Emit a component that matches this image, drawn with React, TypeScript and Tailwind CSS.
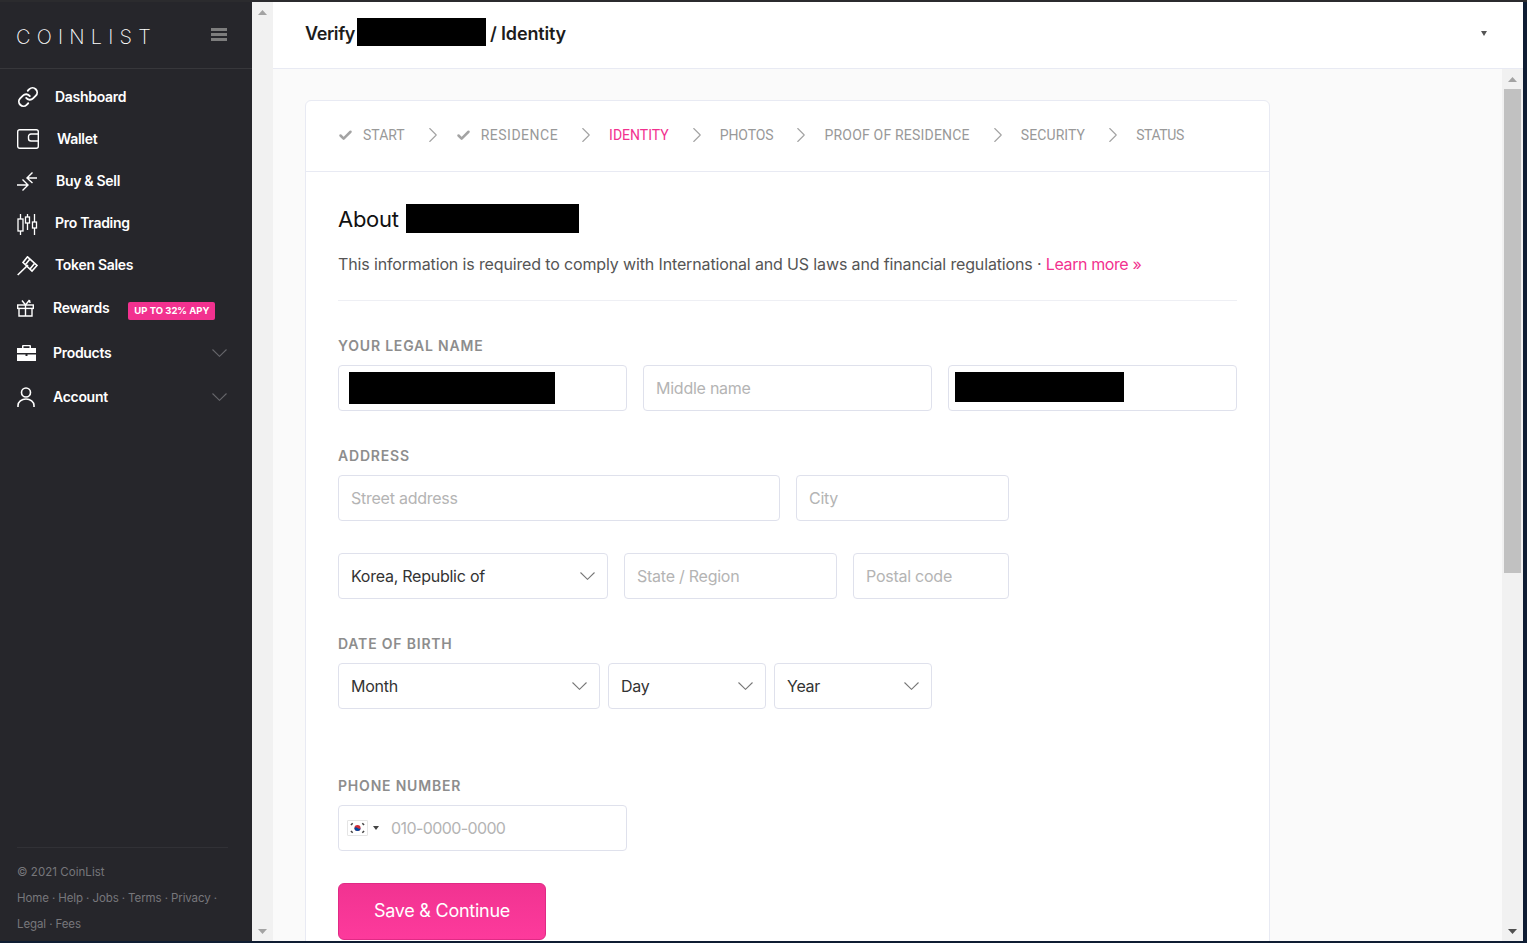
import React from 'react'
import { ChevronRight, Check } from 'lucide-react'

const font = "font-['Inter',sans-serif]"

function LinkIcon() {
  return (
    <svg width="22" height="22" viewBox="0 0 24 24" fill="none" stroke="white" strokeWidth="2" strokeLinecap="round" strokeLinejoin="round">
      <path d="M10 13a5 5 0 0 0 7.54.54l3-3a5 5 0 0 0-7.07-7.07l-1.72 1.71" />
      <path d="M14 11a5 5 0 0 0-7.54-.54l-3 3a5 5 0 0 0 7.07 7.07l1.71-1.71" />
    </svg>
  )
}

function WalletIcon() {
  return (
    <svg width="22" height="20" viewBox="0 0 22 20" fill="none" stroke="white" strokeWidth="1.4">
      <rect x="0.7" y="0.7" width="20.6" height="18.6" rx="2" />
      <path d="M21 5h-7a2.5 2.5 0 0 0-2.5 2.5v2A2.5 2.5 0 0 0 14 12h7" />
    </svg>
  )
}

function SwapIcon() {
  return (
    <svg width="21" height="20" viewBox="0 0 21 20" fill="none" stroke="white" strokeWidth="1.4">
      <path d="M0 14h11M5.5 8.5 11 14l-5.500 5.500" />
      <path d="M10 7h10M15.500 1.500 10 7l5.500 5" />
    </svg>
  )
}

function CandlesIcon() {
  return (
    <svg className="mt-[2px]" width="22" height="21" viewBox="0 0 22 21" fill="none" stroke="white" strokeWidth="1.3">
      <path d="M3.500 0v5M3.500 17v4M10.500 0v3M10.500 9v7M17.500 0v8M17.500 14v7" />
      <rect x="1" y="5" width="5" height="12" />
      <rect x="8.500" y="3" width="4" height="6" />
      <rect x="15.500" y="8" width="4" height="6" />
    </svg>
  )
}

function GavelIcon() {
  return (
    <svg className="mt-[2px]" width="21" height="20" viewBox="0 0 21 20" fill="none" stroke="white" strokeWidth="1.6">
      <path d="M0.700 19 11 9" />
      <path d="M10.500 0.800 20 9.500 15 15 6 6.500Z" />
      <path d="m13 3-4.500 5.500M17.500 7.500 13 13" />
    </svg>
  )
}

function GiftIcon() {
  return (
    <svg width="17" height="18" viewBox="0 0 17 18" fill="none" stroke="white" strokeWidth="1.4">
      <rect x="0.700" y="6" width="15.600" height="3.400" />
      <path d="M2 9.400V17h13V9.400M8.500 6v11" />
      <path d="M8.500 6 5 1.500M8.500 6l4-5M12.500 1l.5 3" />
    </svg>
  )
}

function CaseIcon() {
  return (
    <svg width="19" height="16" viewBox="0 0 19 16" fill="white">
      <path d="M6 0h7a1 1 0 0 1 1 1v2h5v5H0V3h5V1a1 1 0 0 1 1-1Zm.500 1.300V3h6V1.300Z" fillRule="evenodd" />
      <path d="M0 9.500h8.500V11h2V9.500H19V16H0Z" />
    </svg>
  )
}

function UserIcon() {
  return (
    <svg width="18" height="20" viewBox="0 0 18 20" fill="none" stroke="white" strokeWidth="1.600">
      <circle cx="9" cy="5.500" r="4.500" />
      <path d="M1 20v-1.500a8 6.500 0 0 1 16 0V20" />
    </svg>
  )
}

function WideChevron({ className }: { className: string }) {
  return (
    <svg className={className} width="15" height="8" viewBox="0 0 15 8" fill="none" stroke="currentColor" strokeWidth="1.100">
      <path d="M0.500 0.500 7.500 7.300 14.500 0.500" />
    </svg>
  )
}

function NavRow({ icon, label, labelClass, rowClass, badge, chevron }: { icon: React.ReactNode; label: string; labelClass: string; rowClass: string; badge?: boolean; chevron?: boolean }) {
  return (
    <div className={`flex items-center pl-[17px] pr-[25px] ${rowClass}`}>
      {icon}
      <span className={`mb-[1px] text-[14px] font-semibold text-white tracking-[-0.3px] ${labelClass}`}>{label}</span>
      {badge && <span className="ml-[19px] mt-[6px] flex h-[18px] w-[87px] items-center justify-center rounded-[2px] bg-[#f2318f] text-[9.500px] font-bold text-white">UP TO 32% APY</span>}
      {chevron && <WideChevron className="ml-auto text-[#66666b]" />}
    </div>
  )
}

function ScrollArrow({ up, dark }: { up?: boolean; dark?: boolean }) {
  return (
    <div className={`flex h-[20px] items-center justify-center ${dark ? 'text-[#505050]' : 'text-[#a3a3a3]'}`}>
      <svg width="9" height="5" viewBox="0 0 9 5" fill="currentColor">
        {up ? <path d="M4.500 0 9 5H0Z" /> : <path d="M0 0h9L4.500 5Z" />}
      </svg>
    </div>
  )
}

function Sidebar() {
  return (
    <aside className="flex h-full w-[252px] shrink-0 flex-col bg-[#26262b]">
      <div className="flex h-[67px] items-center justify-between border-b border-[#37373b] pl-[16px] pr-[25px]">
        <span className="mt-[3px] text-[20px] font-extralight leading-none tracking-[6.200px] text-white">COINLIST</span>
        <div className="flex flex-col gap-[2px] pb-[2px]">
          <div className="h-[3px] w-[16px] bg-[#7d7d7d]" />
          <div className="h-[3px] w-[16px] bg-[#7d7d7d]" />
          <div className="h-[3px] w-[16px] bg-[#7d7d7d]" />
        </div>
      </div>
      <nav className="flex flex-col pt-[7px]">
        <NavRow rowClass="h-[42px]" icon={<LinkIcon />} label="Dashboard" labelClass="ml-[16px]" />
        <NavRow rowClass="h-[42px]" icon={<WalletIcon />} label="Wallet" labelClass="ml-[18px]" />
        <NavRow rowClass="h-[42px]" icon={<SwapIcon />} label="Buy & Sell" labelClass="ml-[18px]" />
        <NavRow rowClass="h-[42px]" icon={<CandlesIcon />} label="Pro Trading" labelClass="ml-[16px]" />
        <NavRow rowClass="h-[42px]" icon={<GavelIcon />} label="Token Sales" labelClass="ml-[17px]" />
        <NavRow rowClass="h-[44px]" icon={<GiftIcon />} label="Rewards" labelClass="ml-[19px]" badge />
        <NavRow rowClass="h-[45px]" icon={<CaseIcon />} label="Products" labelClass="ml-[17px]" chevron />
        <NavRow rowClass="h-[44px]" icon={<UserIcon />} label="Account" labelClass="ml-[18px]" chevron />
      </nav>
      <div className="mx-[17px] mt-auto w-[211px] whitespace-nowrap border-t border-[#313136] pb-[4px] pt-[11px] text-[11.500px] leading-[26px] tracking-[-0.1px] text-[#77777b]">
        <div className="tracking-[0.05px]">© 2021 CoinList</div>
        <div>Home · Help · Jobs · Terms · Privacy ·</div>
        <div>Legal · Fees</div>
      </div>
    </aside>
  )
}

function Step({ label, done, active, last, className }: { label: string; done?: boolean; active?: boolean; last?: boolean; className?: string }) {
  return (
    <div className="flex items-center">
      {done && <Check className="mr-[10px] text-[#a3a3a3]" size={15} strokeWidth={4} />}
      <span className={`font-['Roboto',sans-serif] text-[14px] ${active ? 'text-[#f2318f]' : 'text-[#999999]'} ${className ?? ''}`}>{label}</span>
      {!last && <ChevronRight className="ml-[15px] mr-[10px] text-[#a3a3a3]" size={26} strokeWidth={1} />}
    </div>
  )
}

function Label({ children, className }: { children: React.ReactNode; className: string }) {
  return <div className={`text-[14px] font-semibold leading-[20px] tracking-[0.8px] text-[#8d8d8d] ${className}`}>{children}</div>
}

function Field({ placeholder, className, children }: { placeholder?: string; className: string; children?: React.ReactNode }) {
  return (
    <div className={`flex h-[46px] items-center rounded-[4px] border border-[#dfe1ec] bg-white px-[12px] pb-[1px] text-[16px] tracking-[-0.25px] text-[#b4b4b4] ${className}`}>
      {placeholder}
      {children}
    </div>
  )
}

function SelectField({ value, className }: { value: string; className: string }) {
  return (
    <div className={`flex h-[46px] items-center justify-between rounded-[4px] border border-[#dfe1ec] bg-white pl-[12px] pr-[12px] text-[16px] tracking-[-0.25px] text-[#333333] ${className}`}>
      <span className="mb-[1px]">{value}</span>
      <WideChevron className="text-[#777777]" />
    </div>
  )
}

function KoreaFlag() {
  return (
    <svg width="21" height="16" viewBox="0 0 21 16" className="rounded-[1px] border border-[#e5e5e5]">
      <rect width="21" height="16" fill="white" />
      <circle cx="10.500" cy="8" r="3.500" fill="#cd2e3a" />
      <path d="M7 8a3.500 3.500 0 0 0 7 0c-1 1.500-2.500 1-3.500 0S8 6.500 7 8Z" fill="#0047a0" />
      <path d="M3 4.500 5 2.500M16 2.500l2 2M3 11.500l2 2M16 13.500l2-2" stroke="#444444" strokeWidth="1.800" />
    </svg>
  )
}

export default function App() {
  return (
    <div className={`flex h-[943px] w-[1527px] flex-col overflow-hidden bg-[#0f1d33] ${font}`}>
      <div className="h-[2px] shrink-0 bg-[#2b2b2e]" />
      <div className="flex min-h-0 flex-1 pr-[4px] pb-[2px]">
        <Sidebar />
        <div className="flex w-[21px] shrink-0 flex-col justify-between bg-[#f1f1f1]">
          <ScrollArrow up />
          <ScrollArrow />
        </div>
        <div className="flex min-w-0 flex-1 flex-col bg-white">
          <header className="flex h-[67px] shrink-0 items-center justify-between border-b border-[#e8eaf3] pb-[4px] pl-[32px] pr-[36px]">
            <div className="flex items-center text-[18px] font-semibold tracking-[-0.4px] text-[#1c1c1c]">
              <span>Verify</span>
              <div className="mb-[2px] ml-[2px] h-[28px] w-[129px] bg-black" />
              <span className="ml-[4px] tracking-[-0.15px]">/ Identity</span>
            </div>
            <svg width="6" height="5" viewBox="0 0 6 5" fill="#555555"><path d="M0 0h6L3 5Z" /></svg>
          </header>
          <div className="flex min-h-0 flex-1">
            <main className="min-w-0 flex-1 overflow-hidden bg-[#fafafa] pl-[32px] pt-[31px]">
              <section className="w-[965px] rounded-[6px] border border-[#e8eaf3] bg-white pb-[40px]">
                <div className="flex h-[71px] items-center border-b border-[#e8eaf3] pb-[2px] pl-[32px]">
                  <Step label="START" done />
                  <Step label="RESIDENCE" done className="tracking-[0.5px]" />
                  <Step label="IDENTITY" active />
                  <Step label="PHOTOS" className="tracking-[-0.1px]" />
                  <Step label="PROOF OF RESIDENCE" className="tracking-[0.2px]" />
                  <Step label="SECURITY" className="tracking-[0.1px]" />
                  <Step label="STATUS" last className="tracking-[-0.4px]" />
                </div>
                <div className="px-[32px]">
                  <div className="mt-[32px] flex items-center">
                    <h1 className="h-[29px] pt-[1px] text-[22px] font-normal leading-[29px] tracking-[-0.3px] text-[#111111]">About</h1>
                    <div className="ml-[7px] h-[29px] w-[173px] bg-black" />
                  </div>
                  <p className="mt-[19px] border-b border-[#eeeff4] pb-[24px] text-[16px] leading-[24px] tracking-[-0.14px] text-[#555555]">
                    This information is required to comply with International and US laws and financial regulations · <span className="tracking-[-0.4px] text-[#f2318f]">Learn more »</span>
                  </p>
                  <Label className="mt-[35px]">YOUR LEGAL NAME</Label>
                  <div className="mt-[9px] flex gap-[16px]">
                    <Field className="w-[289px] !px-[10px]"><div className="mt-[1px] h-[32px] w-[206px] bg-black" /></Field>
                    <Field className="w-[289px]" placeholder="Middle name" />
                    <Field className="w-[289px] !px-[6px]"><div className="mb-[1px] h-[30px] w-[169px] bg-black" /></Field>
                  </div>
                  <Label className="mt-[35px]">ADDRESS</Label>
                  <div className="mt-[9px] flex gap-[16px]">
                    <Field className="w-[442px]" placeholder="Street address" />
                    <Field className="w-[213px]" placeholder="City" />
                  </div>
                  <div className="mt-[32px] flex gap-[16px]">
                    <SelectField className="w-[270px]" value="Korea, Republic of" />
                    <Field className="w-[213px]" placeholder="State / Region" />
                    <Field className="w-[156px]" placeholder="Postal code" />
                  </div>
                  <Label className="mt-[35px]">DATE OF BIRTH</Label>
                  <div className="mt-[9px] flex gap-[8px]">
                    <SelectField className="w-[262px]" value="Month" />
                    <SelectField className="w-[158px]" value="Day" />
                    <SelectField className="w-[158px]" value="Year" />
                  </div>
                  <Label className="mt-[67px]">PHONE NUMBER</Label>
                  <div className="mt-[9px]">
                    <Field className="w-[289px] !px-[8px]" >
                      <KoreaFlag />
                      <svg className="ml-[5px]" width="6" height="4" viewBox="0 0 6 4" fill="#444444"><path d="M0 0h6L3 4Z" /></svg>
                      <span className="ml-[12px] tracking-[-0.6px]">010-0000-0000</span>
                    </Field>
                  </div>
                  <button className="mt-[32px] h-[57px] w-[208px] rounded-[6px] border border-[#e02a85] bg-gradient-to-b from-[#f13391] to-[#fd3a9c] pb-[2px] text-[18px] font-normal tracking-[-0.25px] text-white">Save &amp; Continue</button>
                </div>
              </section>
            </main>
            <div className="flex w-[21px] shrink-0 flex-col bg-[#f1f1f1]">
              <ScrollArrow up />
              <div className="mx-[2px] h-[484px] bg-[#c1c1c1]" />
              <div className="mt-auto"><ScrollArrow dark /></div>
            </div>
          </div>
        </div>
      </div>
    </div>
  )
}
